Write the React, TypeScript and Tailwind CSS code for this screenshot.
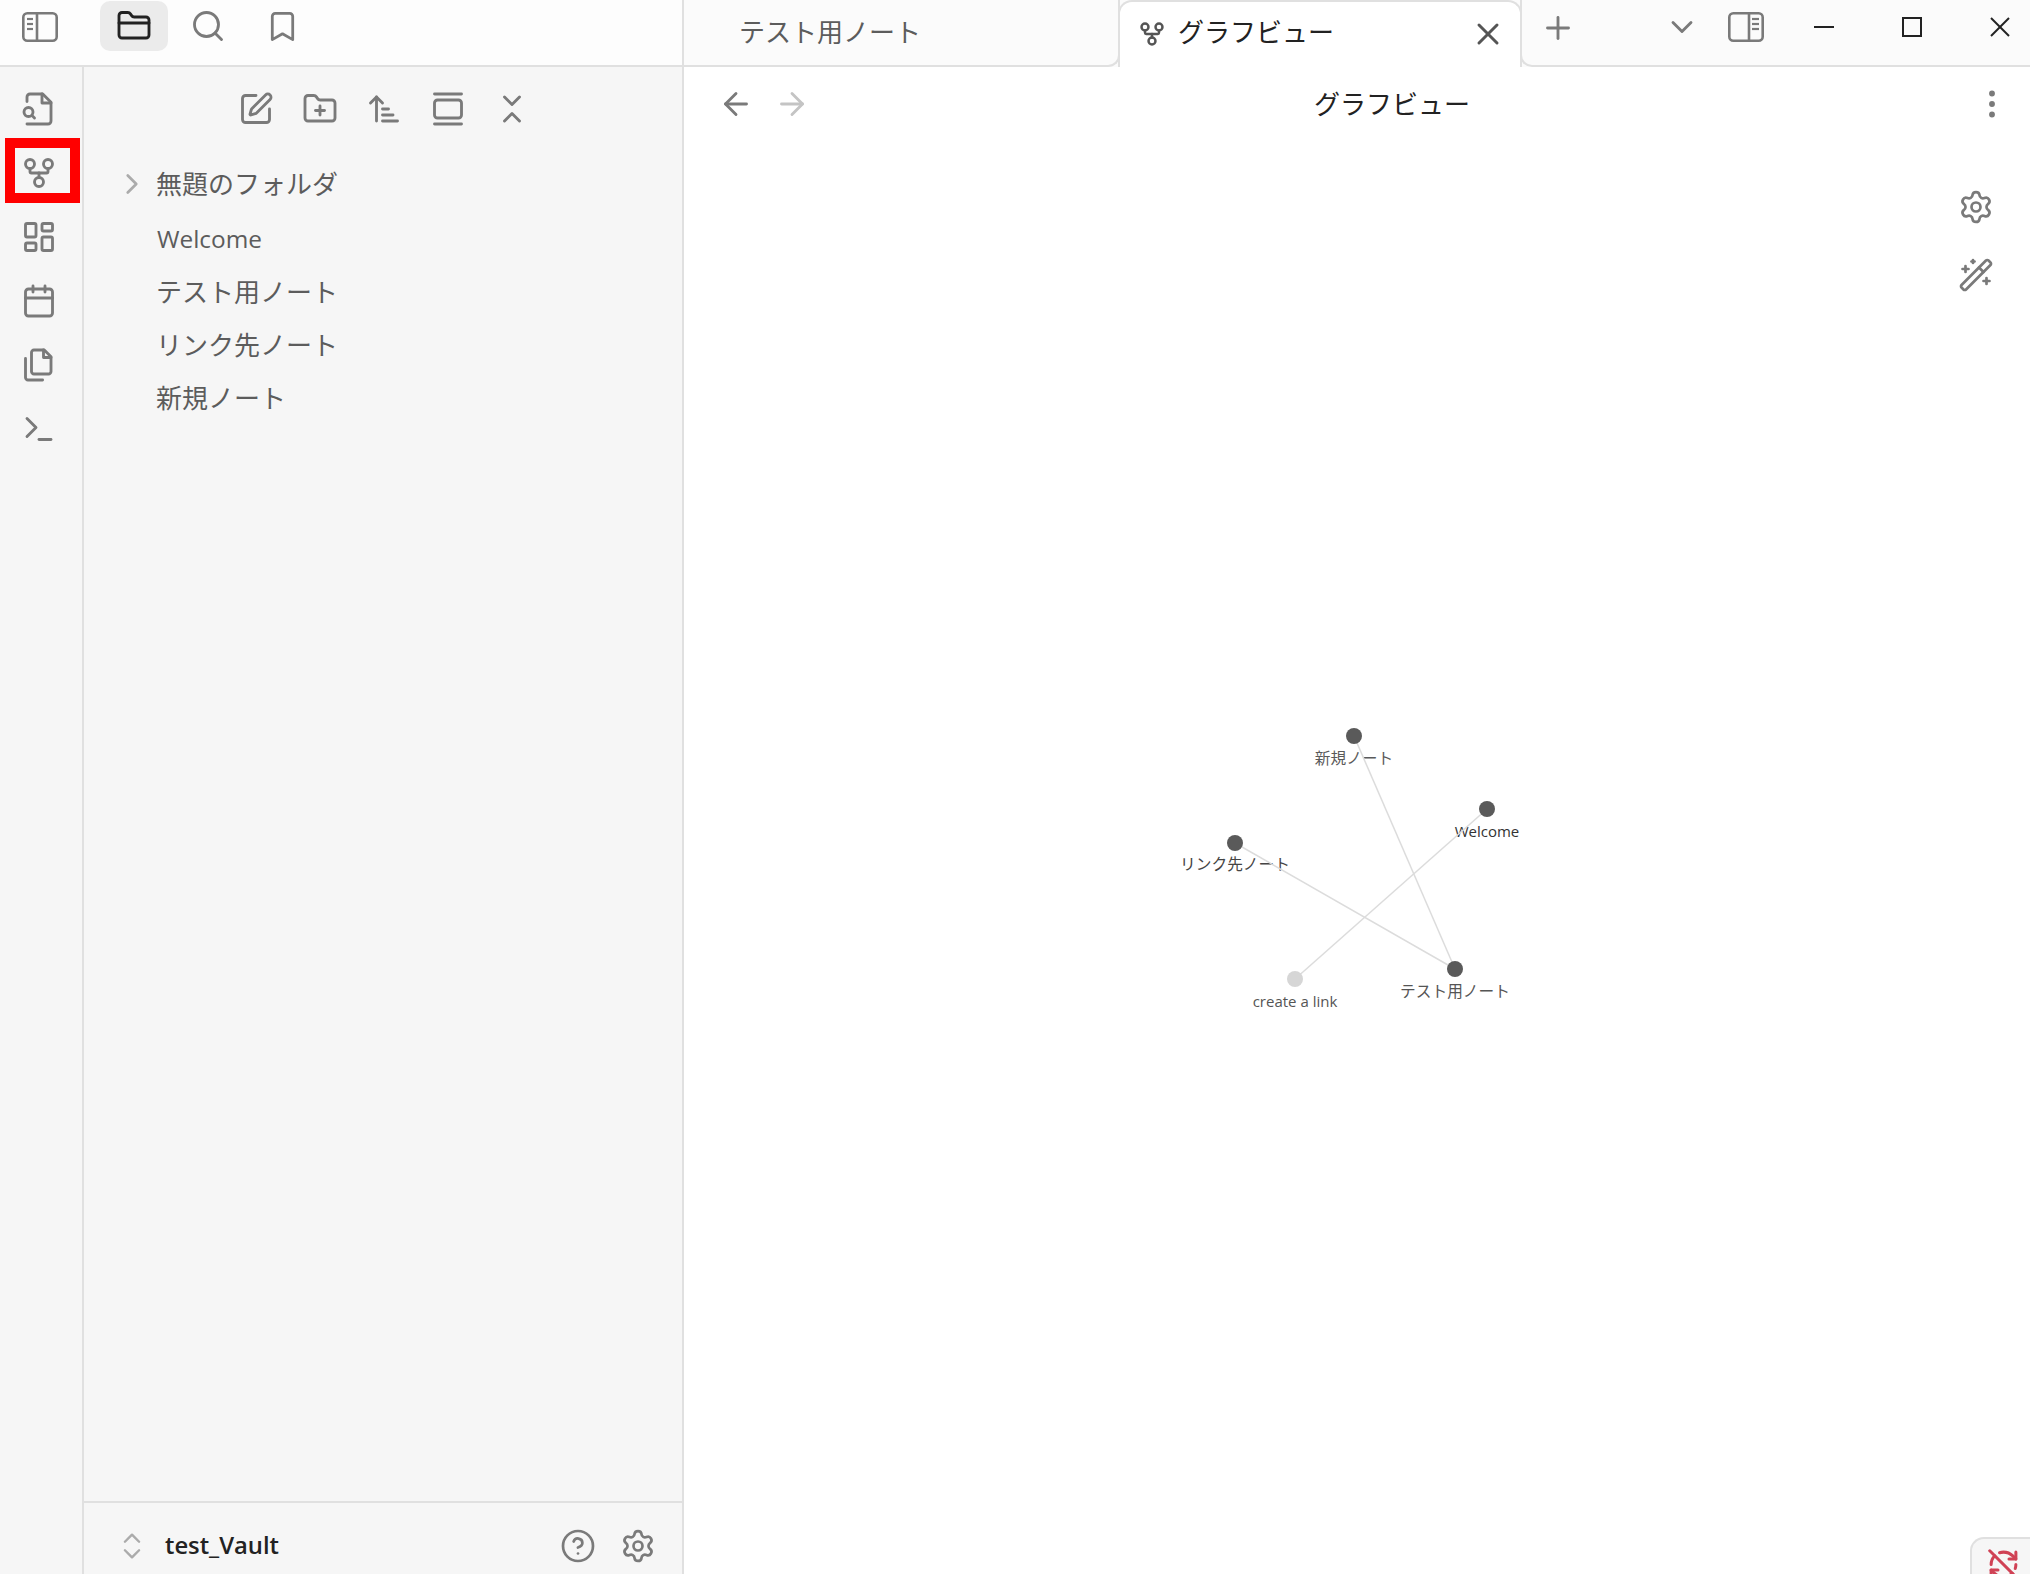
import {
  ArrowLeft, ArrowRight, ArrowUpNarrowWide, Bookmark, Calendar, ChevronDown, ChevronRight, ChevronsDownUp, ChevronsUpDown,
  CircleHelp, EllipsisVertical, FolderClosed, FolderPlus, GalleryVertical, GitFork, LayoutDashboard, Plus,
  RefreshCwOff, Search, Settings, SquarePen, Terminal, WandSparkles, X,
} from "lucide-react";
import type { ComponentType } from "react";

const font = "font-['Open_Sans','Noto_Sans_CJK_JP',sans-serif]";
const sw = 1.9;

type IconProps = { size?: number; strokeWidth?: number; color?: string };

function Glyph({ size, strokeWidth, color, paths }: IconProps & { paths: string[] }) {
  return (
    <svg width={size} height={size} viewBox="0 0 24 24" fill="none" stroke={color} strokeWidth={strokeWidth} strokeLinecap="round" strokeLinejoin="round">
      {paths.map((d) => <path key={d} d={d} />)}
    </svg>
  );
}

const FileSearchOld = (p: IconProps) => (
  <Glyph {...p} paths={["M4 22h14a2 2 0 0 0 2-2V7.5L14.5 2H6a2 2 0 0 0-2 2v3", "M14 2v6h6", "M5 17a3 3 0 1 0 0-6 3 3 0 0 0 0 6z", "m9 18-1.5-1.5"]} />
);
const FilesOld = (p: IconProps) => (
  <Glyph {...p} paths={[
    "M15.5 2H8.6c-.4 0-.8.2-1.1.5-.3.3-.5.7-.5 1.1v12.8c0 .4.2.8.5 1.1.3.3.7.5 1.1.5h9.8c.4 0 .8-.2 1.1-.5.3-.3.5-.7.5-1.1V6.5L15.5 2z",
    "M3 7.6v12.8c0 .4.2.8.5 1.1.3.3.7.5 1.1.5h9.8",
    "M15 2v5h5",
  ]} />
);

function SidebarIcon({ side }: { side: "left" | "right" }) {
  const left = side === "left";
  return (
    <svg width="36" height="30" viewBox="0 0 36 30" fill="none" stroke="#7a7a7a" strokeWidth="2.6" strokeLinecap="round">
      <rect x="1.3" y="1.3" width="33.4" height="27.4" rx="4" />
      <line x1={left ? 15 : 21} y1="1.3" x2={left ? 15 : 21} y2="28.7" />
      <g strokeWidth="2.2" strokeLinecap="butt">
        <line x1={left ? 5 : 24} y1="7" x2={left ? 11 : 31} y2="7" />
        <line x1={left ? 5 : 24} y1="12" x2={left ? 11 : 31} y2="12" />
        <line x1={left ? 5 : 24} y1="17" x2={left ? 11 : 31} y2="17" />
      </g>
    </svg>
  );
}

const ribbon: ComponentType<IconProps>[] = [FileSearchOld, GitFork, LayoutDashboard, Calendar, FilesOld, Terminal];
const navIcons = [SquarePen, FolderPlus, ArrowUpNarrowWide, GalleryVertical, ChevronsDownUp];
const files = ["Welcome", "テスト用ノート", "リンク先ノート", "新規ノート"];

const nodes = [
  { x: 1354, y: 736, label: "新規ノート", ly: 764, c: "#5a5a5a", t: "#5a5a5a", fs: 15.7 },
  { x: 1487, y: 809, label: "Welcome", ly: 837, c: "#5a5a5a", t: "#333333", fs: 15 },
  { x: 1235, y: 843, label: "リンク先ノート", ly: 870, c: "#5a5a5a", t: "#444444", fs: 15.7 },
  { x: 1455, y: 969, label: "テスト用ノート", ly: 997, c: "#5a5a5a", t: "#555555", fs: 15.7 },
  { x: 1295, y: 979, label: "create a link", ly: 1007, c: "#d6d6d6", t: "#555555", fs: 15 },
];
const edges = [[0, 3], [2, 3], [1, 4]];

function Graph() {
  return (
    <svg className="absolute left-0 top-0" width="1346" height="1507" viewBox="684 67 1346 1507" style={{ fontFamily: "'Open Sans','Noto Sans CJK JP',sans-serif" }}>
      {nodes.map((n) => (
        <text key={n.label} x={n.x} y={n.ly} textAnchor="middle" fontSize={n.fs} fill={n.t}>{n.label}</text>
      ))}
      {edges.map(([a, b]) => (
        <line key={`${a}-${b}`} x1={nodes[a].x} y1={nodes[a].y} x2={nodes[b].x} y2={nodes[b].y} stroke="#dcdcdc" strokeWidth="1.5" />
      ))}
      {nodes.map((n) => (
        <circle key={n.label} cx={n.x} cy={n.y} r="8" fill={n.c} />
      ))}
    </svg>
  );
}

export default function App() {
  return (
    <div className={`${font} flex h-[1574px] w-[2030px] flex-col overflow-hidden bg-white text-[26px] text-[#5c5c5c]`}>
      {/* top bar */}
      <div className="flex h-[67px] shrink-0 bg-[#fbfbfb]">
        <div className="flex h-[67px] w-[684px] shrink-0 border-r-2 border-b-2 border-[#e0e0e0] bg-[#fdfdfd] pl-[22px]">
          <div className="flex h-[54px] w-[36px] items-center justify-center"><SidebarIcon side="left" /></div>
          <div className="ml-[42px] mt-[1px] flex h-[50px] w-[68px] items-center justify-center rounded-[10px] bg-[#ebebeb]">
            <FolderClosed size={36} strokeWidth={sw} color="#222222" />
          </div>
          <div className="ml-[6px] flex h-[52px] w-[68px] items-center justify-center"><Search size={36} strokeWidth={sw} color="#7a7a7a" /></div>
          <div className="ml-[6px] flex h-[52px] w-[68px] items-center justify-center"><Bookmark size={35} strokeWidth={sw} color="#7a7a7a" /></div>
        </div>
        <div className="flex h-[67px] w-[436px] shrink-0 items-center rounded-br-[12px] border-r-2 border-b-2 border-[#e0e0e0] pl-[55px]">
          <span>テスト用ノート</span>
        </div>
        <div className="-ml-[2px] flex h-[67px] w-[404px] shrink-0 items-center rounded-t-[14px] border-x-2 border-t-2 border-[#e0e0e0] bg-white pb-[2px] pl-[18px] pr-[14px] text-[#222222]">
          <GitFork size={28} strokeWidth={2.1} color="#555555" />
          <span className="ml-[12px] flex-1 pb-[2px]">グラフビュー</span>
          <X size={36} strokeWidth={2} color="#555555" />
        </div>
        <div className="-ml-[2px] flex h-[67px] flex-1 rounded-bl-[12px] border-b-2 border-l-2 border-[#e0e0e0] pb-[11px] text-[#222222]">
          <div className="ml-[18px] flex h-full w-[36px] items-center justify-center pt-[2px]"><Plus size={36} strokeWidth={sw} color="#7a7a7a" /></div>
          <div className="flex-1" />
          <div className="flex h-full w-[36px] items-center justify-center"><ChevronDown size={36} strokeWidth={sw} color="#7a7a7a" /></div>
          <div className="ml-[28px] flex h-full w-[36px] items-center justify-center"><SidebarIcon side="right" /></div>
          <div className="ml-[16px] flex h-full w-[88px] items-center justify-center"><div className="h-[2px] w-[20px] bg-[#222222]" /></div>
          <div className="flex h-full w-[88px] items-center justify-center"><div className="h-[20px] w-[20px] border-2 border-[#222222]" /></div>
          <div className="flex h-full w-[74px] items-center justify-center pl-[14px]">
            <svg width="20" height="20" viewBox="0 0 20 20" stroke="#222222" strokeWidth="2"><line x1="1" y1="1" x2="19" y2="19" /><line x1="19" y1="1" x2="1" y2="19" /></svg>
          </div>
        </div>
      </div>

      {/* body */}
      <div className="flex min-h-0 flex-1">
        <div className="relative w-[84px] shrink-0 border-r-2 border-[#e0e0e0] bg-[#f6f6f6] pt-[10px] pr-[5px]">
          {ribbon.map((Icon, i) => (
            <div key={i} className="flex h-[64px] items-center justify-center">
              <Icon size={36} strokeWidth={sw} color="#7a7a7a" />
            </div>
          ))}
          <div className="absolute left-[5px] top-[71px] h-[65px] w-[75px] border-[10px] border-[#ff0000]" />
        </div>

        <div className="flex w-[600px] shrink-0 flex-col border-r-2 border-[#e0e0e0] bg-[#f6f6f6]">
          <div className="flex h-[82px] shrink-0 items-center justify-center pl-[2px] pt-[2px]">
            {navIcons.map((Icon, i) => (
              <div key={i} className="flex w-[64px] items-center justify-center">
                <Icon size={36} strokeWidth={sw} color="#7a7a7a" />
              </div>
            ))}
          </div>
          <div className="mt-[8px]">
            <div className="flex h-[54px] items-center">
              <div className="w-[72px] pl-[31px]"><ChevronRight size={34} strokeWidth={sw} color="#ababab" /></div>
              <span className="pt-[1px]">無題のフォルダ</span>
            </div>
            {files.map((f) => (
              <div key={f} className={`flex h-[53.4px] items-center pl-[72px] ${f === "Welcome" ? "pl-[73px] pt-[3px] text-[24.4px]" : "pt-[2px]"}`}>{f}</div>
            ))}
          </div>
          <div className="mt-auto flex h-[73px] items-center border-t-2 border-[#e0e0e0] pt-[15px]">
            <div className="w-[81px] pl-[31px]"><ChevronsUpDown size={34} strokeWidth={1.7} color="#ababab" /></div>
            <span className="flex-1 text-[23.8px] font-semibold text-[#222222]">test_Vault</span>
            <CircleHelp size={36} strokeWidth={1.8} color="#7a7a7a" />
            <div className="ml-[24px] mr-[26px]"><Settings size={36} strokeWidth={1.8} color="#7a7a7a" /></div>
          </div>
        </div>

        <div className="relative min-w-0 flex-1 bg-white">
          <Graph />
          <div className="relative flex h-[74px] items-center text-[#222222]">
            <div className="flex w-[136px] items-center pl-[34px]">
              <ArrowLeft size={36} strokeWidth={sw} color="#7a7a7a" />
              <div className="ml-[20px]"><ArrowRight size={36} strokeWidth={sw} color="#c4c4c4" /></div>
            </div>
            <div className="flex-1 pl-[2px] text-center">グラフビュー</div>
            <div className="flex w-[68px] items-center pl-[12px]"><EllipsisVertical size={36} strokeWidth={sw} color="#7a7a7a" /></div>
          </div>
          <div className="absolute right-[36px] top-[122px] flex flex-col gap-[32px]">
            <Settings size={36} strokeWidth={1.8} color="#7a7a7a" />
            <WandSparkles size={36} strokeWidth={1.8} color="#7a7a7a" />
          </div>
          <div className="absolute bottom-0 right-0 flex h-[37px] w-[60px] justify-center overflow-hidden rounded-tl-[14px] border-t-2 border-l-2 border-[#e0e0e0] bg-[#f6f6f6] pl-[4px] pt-[9px]">
            <RefreshCwOff size={33} strokeWidth={2.2} color="#d04255" className="shrink-0" />
          </div>
        </div>
      </div>
    </div>
  );
}
